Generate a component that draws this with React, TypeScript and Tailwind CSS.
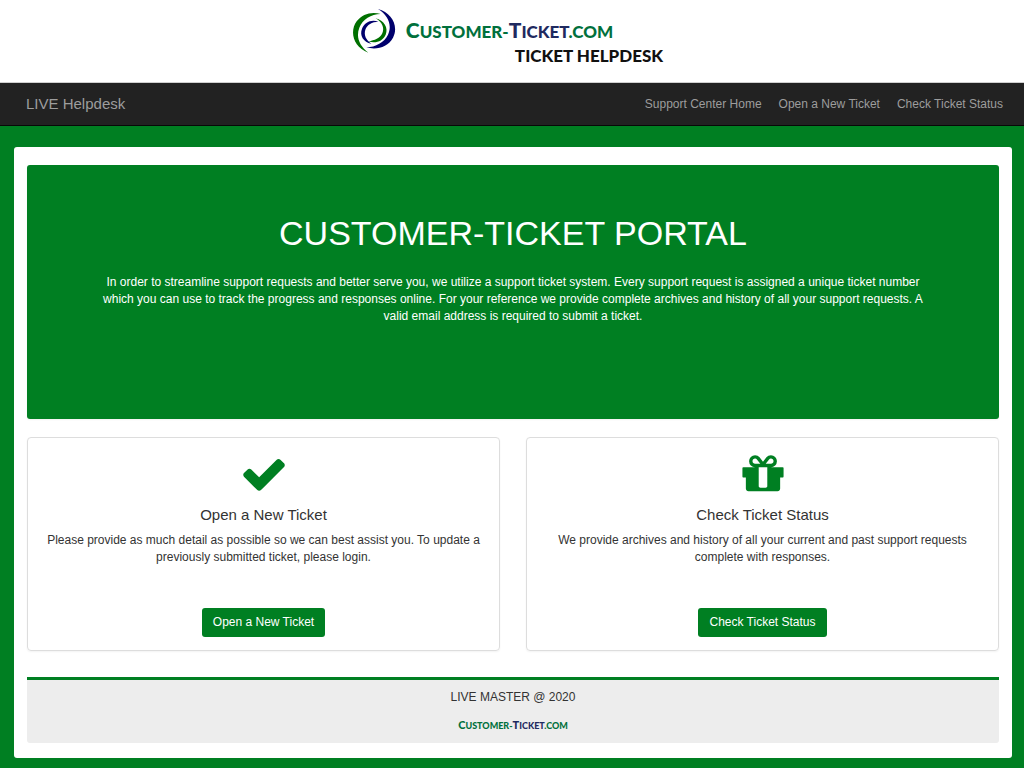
import React from 'react';

type WordmarkProps = {
  className: string;
  capClassName: string;
};

type ServiceCardProps = {
  title: string;
  text: string;
  path: string;
};

const navLinks = ['Support Center Home', 'Open a New Ticket', 'Check Ticket Status'];

const CHECK_PATH =
  'M1671 566q0 40-28 68l-724 724-136 136q-28 28-68 28t-68-28l-136-136-362-362q-28-28-28-68t28-68l136-136q28-28 68-28t68 28l294 295 656-657q28-28 68-28t68 28l136 136q28 28 28 68z';
const GIFT_PATH =
  'M1056 1356v-716h-320v716q0 25 18 38.5t46 13.5h192q28 0 46-13.5t18-38.5zm-456-844h195l-126-161q-26-31-69-31-40 0-68 28t-28 68 28 68 68 28zm688-96q0-40-28-68t-68-28q-43 0-69 31l-125 161h194q40 0 68-28t28-68zm376 256v320q0 14-9 23t-23 9h-96v416q0 40-28 68t-68 28h-1088q-40 0-68-28t-28-68v-416h-96q-14 0-23-9t-9-23v-320q0-14 9-23t23-9h440q-93 0-158.5-65.5t-65.5-158.5 65.5-158.5 158.5-65.5q107 0 168 77l128 165 128-165q61-77 168-77 93 0 158.5 65.5t65.5 158.5-65.5 158.5-158.5 65.5h440q14 0 23 9t9 23z';

const services: ServiceCardProps[] = [
  {
    title: 'Open a New Ticket',
    text: 'Please provide as much detail as possible so we can best assist you. To update a previously submitted ticket, please login.',
    path: CHECK_PATH,
  },
  {
    title: 'Check Ticket Status',
    text: 'We provide archives and history of all your current and past support requests complete with responses.',
    path: GIFT_PATH,
  },
];

function LogoMark() {
  return (
    <svg className="h-[46px] w-[45px] shrink-0" viewBox="36 24 135 138" aria-hidden="true">
      <path
        fill="#007000"
        d="M125 42C98 34 70 42 53 64C31 94 42 142 88 158C62 138 50 112 61 83C71 58 96 43 125 42Z"
      />
      <path
        fill="#00006c"
        d="M117 27C158 37 180 79 162 113C147 142 112 151 82 142C110 141 136 127 147 104C160 76 148 46 117 27Z"
      />
      <path
        fill="#00006c"
        d="M118 65C97 57 76 67 69 86C61 106 73 126 97 131C81 120 74 105 79 89C84 74 99 65 118 65Z"
      />
      <path
        fill="#007000"
        d="M110 55C135 61 149 84 140 104C131 124 110 131 88 124C107 122 123 114 130 100C137 84 130 67 110 55Z"
      />
    </svg>
  );
}

// the initials are set a little larger than the rest, like small caps
function Wordmark({ className, capClassName }: WordmarkProps) {
  return (
    <span className={`whitespace-nowrap font-[Lato,sans-serif] font-black text-[#00703c] ${className}`}>
      <span className={capClassName}>C</span>USTOMER-
      <span className="text-[#1f2a60]">
        <span className={capClassName}>T</span>ICKET
      </span>
      .COM
    </span>
  );
}

function ServiceCard({ title, text, path }: ServiceCardProps) {
  return (
    <section className="flex flex-1 flex-col items-center rounded border border-[#ddd] px-4 pt-3 pb-[13px] text-center shadow-xs">
      <svg className="size-12 fill-[#007f22]" viewBox="0 0 1792 1792" aria-hidden="true">
        <path d={path} />
      </svg>
      <h2 className="mt-2 text-[15px] leading-[17px]">{title}</h2>
      <p className="mt-[9px] mb-[42px] text-[12px] leading-[17px]">{text}</p>
      <a
        href="#"
        className="mt-auto rounded-[3px] bg-[#007f22] px-[11px] py-1.5 text-[12px] leading-[17px] text-white"
      >
        {title}
      </a>
    </section>
  );
}

export default function App() {
  return (
    <div className="min-h-screen bg-[#007f22] pb-[10px] font-['Liberation_Sans',Arial,sans-serif] text-[#333]">
      <header className="flex items-start justify-center bg-white pt-2 pr-[10px] pb-[14px]">
        <LogoMark />
        <div className="ml-[10px] flex h-[60px] flex-col">
          <Wordmark className="pr-[50px] pt-3 text-[17px] leading-5" capClassName="text-[21px]" />
          <span className="mt-1 self-end font-[Lato,sans-serif] text-[17px] leading-5 font-black text-[#111]">
            TICKET HELPDESK
          </span>
        </div>
      </header>

      <nav className="flex h-11 items-center justify-between border-t border-b border-t-[#d0d0d0] border-b-[#080808] bg-[#222] pr-[21px] pl-[26px] text-[#9d9d9d]">
        <a href="#" className="text-[15px]">
          LIVE Helpdesk
        </a>
        <ul className="flex gap-[17px] text-[12px]">
          {navLinks.map((label) => (
            <li key={label}>
              <a href="#">{label}</a>
            </li>
          ))}
        </ul>
      </nav>

      <main className="mt-[21px] mr-3 ml-[14px] rounded-[3px] bg-white px-[13px] pt-[18px] pb-[15px]">
        <section className="rounded-[3px] bg-[#007f22] px-[76px] pt-12 pb-[94px] text-center text-white shadow-xs">
          <h1 className="text-[34px] leading-10">CUSTOMER-TICKET PORTAL</h1>
          <p className="mt-[21px] text-[12px] leading-[17px]">
            In order to streamline support requests and better serve you, we utilize a support ticket
            system. Every support request is assigned a unique ticket number which you can use to track
            the progress and responses online. For your reference we provide complete archives and
            history of all your support requests. A valid email address is required to submit a ticket.
          </p>
        </section>

        <div className="mt-[18px] flex gap-[26px]">
          {services.map((service) => (
            <ServiceCard key={service.title} {...service} />
          ))}
        </div>

        <footer className="mt-[26px] flex flex-col items-center rounded-b-[3px] border-t-3 border-[#007f22] bg-[#ededed] pt-[9px] pb-[9px]">
          <p className="text-[12px] leading-[17px]">LIVE MASTER @ 2020</p>
          <Wordmark className="mt-[11px] text-[9px] leading-4" capClassName="text-[11px]" />
        </footer>
      </main>
    </div>
  );
}
